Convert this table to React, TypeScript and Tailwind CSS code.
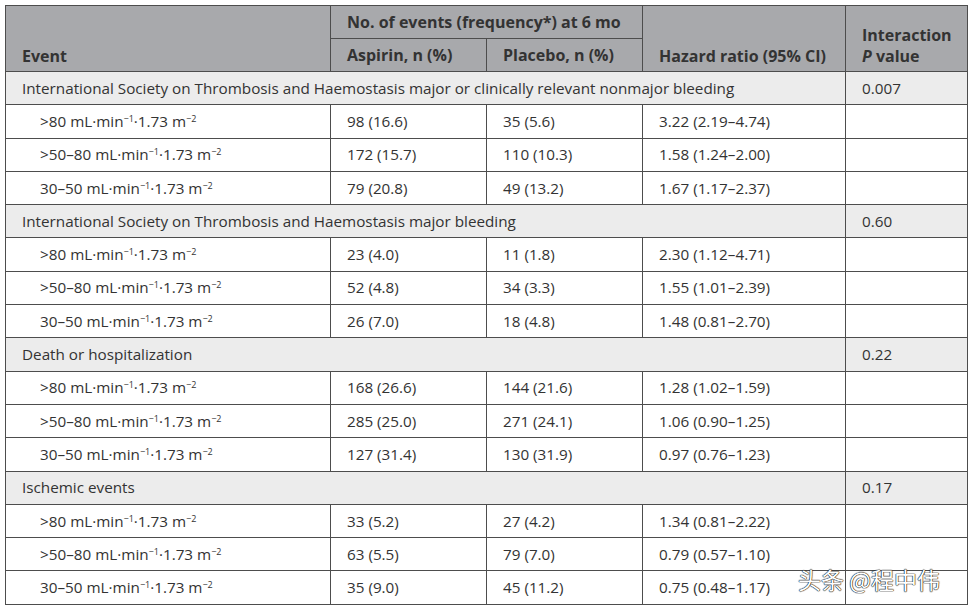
import React from "react";

type Row = { label: string; aspirin: string; placebo: string; hr: string };
type Group = { title: string; p: string; rows: Row[] };

const groups: Group[] = [
  {
    title: "International Society on Thrombosis and Haemostasis major or clinically relevant nonmajor bleeding",
    p: "0.007",
    rows: [
      { label: ">80", aspirin: "98 (16.6)", placebo: "35 (5.6)", hr: "3.22 (2.19–4.74)" },
      { label: ">50–80", aspirin: "172 (15.7)", placebo: "110 (10.3)", hr: "1.58 (1.24–2.00)" },
      { label: "30–50", aspirin: "79 (20.8)", placebo: "49 (13.2)", hr: "1.67 (1.17–2.37)" },
    ],
  },
  {
    title: "International Society on Thrombosis and Haemostasis major bleeding",
    p: "0.60",
    rows: [
      { label: ">80", aspirin: "23 (4.0)", placebo: "11 (1.8)", hr: "2.30 (1.12–4.71)" },
      { label: ">50–80", aspirin: "52 (4.8)", placebo: "34 (3.3)", hr: "1.55 (1.01–2.39)" },
      { label: "30–50", aspirin: "26 (7.0)", placebo: "18 (4.8)", hr: "1.48 (0.81–2.70)" },
    ],
  },
  {
    title: "Death or hospitalization",
    p: "0.22",
    rows: [
      { label: ">80", aspirin: "168 (26.6)", placebo: "144 (21.6)", hr: "1.28 (1.02–1.59)" },
      { label: ">50–80", aspirin: "285 (25.0)", placebo: "271 (24.1)", hr: "1.06 (0.90–1.25)" },
      { label: "30–50", aspirin: "127 (31.4)", placebo: "130 (31.9)", hr: "0.97 (0.76–1.23)" },
    ],
  },
  {
    title: "Ischemic events",
    p: "0.17",
    rows: [
      { label: ">80", aspirin: "33 (5.2)", placebo: "27 (4.2)", hr: "1.34 (0.81–2.22)" },
      { label: ">50–80", aspirin: "63 (5.5)", placebo: "79 (7.0)", hr: "0.79 (0.57–1.10)" },
      { label: "30–50", aspirin: "35 (9.0)", placebo: "45 (11.2)", hr: "0.75 (0.48–1.17)" },
    ],
  },
];

function Unit() {
  return (
    <>
      {" "}mL·min<sup className="text-[9px] -top-[5px]">−1</sup>·1.73 m<sup className="text-[9px] -top-[5px]">−2</sup>
    </>
  );
}

const cell = "border border-[#4d4d4d] px-4 h-[33.3px] align-middle";
const head = "border border-[#4d4d4d] px-4 font-bold text-[16px] text-[#333]";

export default function App() {
  return (
    <div className="w-[969px] h-[609px] bg-white relative pt-[5px] pl-[5px] font-['Open_Sans','Noto_Sans',sans-serif] text-[15.25px] text-[#333]">
      <table className="border-collapse table-fixed w-[962px]">
        <colgroup>
          <col className="w-[325px]" />
          <col className="w-[156px]" />
          <col className="w-[156px]" />
          <col className="w-[203px]" />
          <col className="w-[122px]" />
        </colgroup>
        <thead className="bg-[#a8a9ac]">
          <tr>
            <th rowSpan={2} className={`${head} text-left align-bottom pb-[3px]`}>Event</th>
            <th colSpan={2} className={`${head} text-left h-[33px]`}>No. of events (frequency*) at 6 mo</th>
            <th rowSpan={2} className={`${head} text-left align-bottom pb-[3px]`}>Hazard ratio (95% CI)</th>
            <th rowSpan={2} className={`${head} text-left align-bottom pb-[4px] leading-[21px]`}>
              Interaction
              <br />
              <i>P</i> value
            </th>
          </tr>
          <tr>
            <th className={`${head} text-left h-[33px]`}>Aspirin, n (%)</th>
            <th className={`${head} text-left h-[33px]`}>Placebo, n (%)</th>
          </tr>
        </thead>
        <tbody>
          {groups.map((g) => (
            <React.Fragment key={g.title}>
              <tr className="bg-[#ececec]">
                <td colSpan={4} className={`${cell} whitespace-nowrap`}>{g.title}</td>
                <td className={cell}>{g.p}</td>
              </tr>
              {g.rows.map((r) => (
                <tr key={r.label}>
                  <td className={`${cell} pl-[34px]`}>
                    {r.label}
                    <Unit />
                  </td>
                  <td className={cell}>{r.aspirin}</td>
                  <td className={cell}>{r.placebo}</td>
                  <td className={cell}>{r.hr}</td>
                  <td className={cell}></td>
                </tr>
              ))}
            </React.Fragment>
          ))}
        </tbody>
      </table>
      <div className="absolute left-[798px] top-[562px] text-[23px] text-white font-['Noto_Sans_CJK_SC',sans-serif] [text-shadow:0_0_1px_#111,0_0_1px_#111,0_0_1px_#111]">
        头条 @程中伟
      </div>
    </div>
  );
}
